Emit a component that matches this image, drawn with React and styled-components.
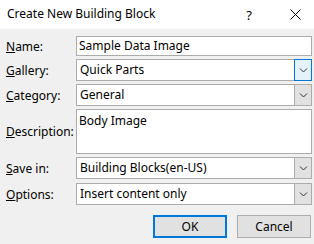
import React from "react";
import styled, { createGlobalStyle } from "styled-components";

const Global = createGlobalStyle`
  html, body { margin: 0; padding: 0; background: #f0f0f0; }
  body { font-family: "Noto Sans", "Liberation Sans", sans-serif; font-size: 12px; color: #000; }
  * { box-sizing: border-box; }
`;

const Dialog = styled.div`
  width: 314px;
  height: 244px;
  background: #f0f0f0;
  display: flex;
  flex-direction: column;
  overflow: hidden;
`;

const TitleBar = styled.div`
  height: 29px;
  background: #fff;
  display: flex;
  align-items: center;
  padding-left: 7px;
`;

const Title = styled.div`
  flex: 1;
  font-size: 12px;
  padding-bottom: 2px;
`;

const TitleButton = styled.div`
  width: ${p => p.$w}px;
  margin-right: ${p => p.$mr || 0}px;
  height: 29px;
  display: flex;
  align-items: center;
  justify-content: center;
  font-size: 13px;
  color: #000;
`;

const Body = styled.div`
  display: flex;
  flex-direction: column;
  padding: 7px 2px 0 6px;
`;

const Row = styled.div`
  display: flex;
  align-items: center;
  margin-bottom: ${p => p.$mb}px;
`;

const Label = styled.div`
  width: 70px;
  font-size: 12px;
  u { text-decoration: underline; text-underline-offset: 1px; }
`;

const Field = styled.div`
  flex: 1;
  height: ${p => p.$h}px;
  background: #fff;
  border: 1px solid #acacac;
  display: flex;
  align-items: ${p => (p.$top ? "flex-start" : "center")};
  padding: ${p => (p.$top ? "2px 0 0 2px" : "0 0 1px 2px")};
  font-size: 12px;
`;

const Combo = styled.div`
  flex: 1;
  height: 22px;
  background: #fff;
  border: 1px solid #acacac;
  display: flex;
  align-items: stretch;
`;

const ComboText = styled.div`
  flex: 1;
  display: flex;
  align-items: center;
  padding: 0 0 1px 3px;
`;

const DropBtn = styled.div`
  width: 18px;
  margin: -1px -1px -1px 0;
  border: 1px solid ${p => (p.$active ? "#0078d7" : "#acacac")};
  background: ${p => (p.$active ? "#e5f1fb" : "#e1e1e1")};
  display: flex;
  align-items: center;
  justify-content: center;
`;

const Buttons = styled.div`
  display: flex;
  justify-content: flex-end;
  gap: 10px;
  margin-top: 10px;
  padding-right: 1px;
`;

const Button = styled.div`
  width: 74px;
  height: 23px;
  background: #e1e1e1;
  border: ${p => (p.$default ? "2px solid #0078d7" : "1px solid #adadad")};
  display: flex;
  align-items: center;
  justify-content: center;
  font-size: 12px;
  padding-bottom: 1px;
`;

const Chevron = () => (
  <svg width="9" height="5" viewBox="0 0 9 5">
    <path d="M1 0.5 L4.5 4 L8 0.5" fill="none" stroke="#333" strokeWidth="1" />
  </svg>
);

const CloseIcon = () => (
  <svg width="11" height="11" viewBox="0 0 11 11">
    <path d="M0.5 0.5 L10.5 10.5 M10.5 0.5 L0.5 10.5" fill="none" stroke="#000" strokeWidth="1" />
  </svg>
);

const ComboBox = ({ value, active }) => (
  <Combo>
    <ComboText>{value}</ComboText>
    <DropBtn $active={active}>
      <Chevron />
    </DropBtn>
  </Combo>
);

export default function App() {
  return (
    <>
      <Global />
      <Dialog>
        <TitleBar>
          <Title>Create New Building Block</Title>
          <TitleButton $w={46} $mr={4}>?</TitleButton>
          <TitleButton $w={38}>
            <CloseIcon />
          </TitleButton>
        </TitleBar>
        <Body>
          <Row $mb={3}>
            <Label><u>N</u>ame:</Label>
            <Field $h={20}>Sample Data Image</Field>
          </Row>
          <Row $mb={3}>
            <Label><u>G</u>allery:</Label>
            <ComboBox value="Quick Parts" active />
          </Row>
          <Row $mb={3}>
            <Label><u>C</u>ategory:</Label>
            <ComboBox value="General" />
          </Row>
          <Row $mb={3}>
            <Label><u>D</u>escription:</Label>
            <Field $h={45} $top>Body Image</Field>
          </Row>
          <Row $mb={4}>
            <Label><u>S</u>ave in:</Label>
            <ComboBox value="Building Blocks(en-US)" />
          </Row>
          <Row $mb={0}>
            <Label><u>O</u>ptions:</Label>
            <ComboBox value="Insert content only" />
          </Row>
          <Buttons>
            <Button $default>OK</Button>
            <Button>Cancel</Button>
          </Buttons>
        </Body>
      </Dialog>
    </>
  );
}
